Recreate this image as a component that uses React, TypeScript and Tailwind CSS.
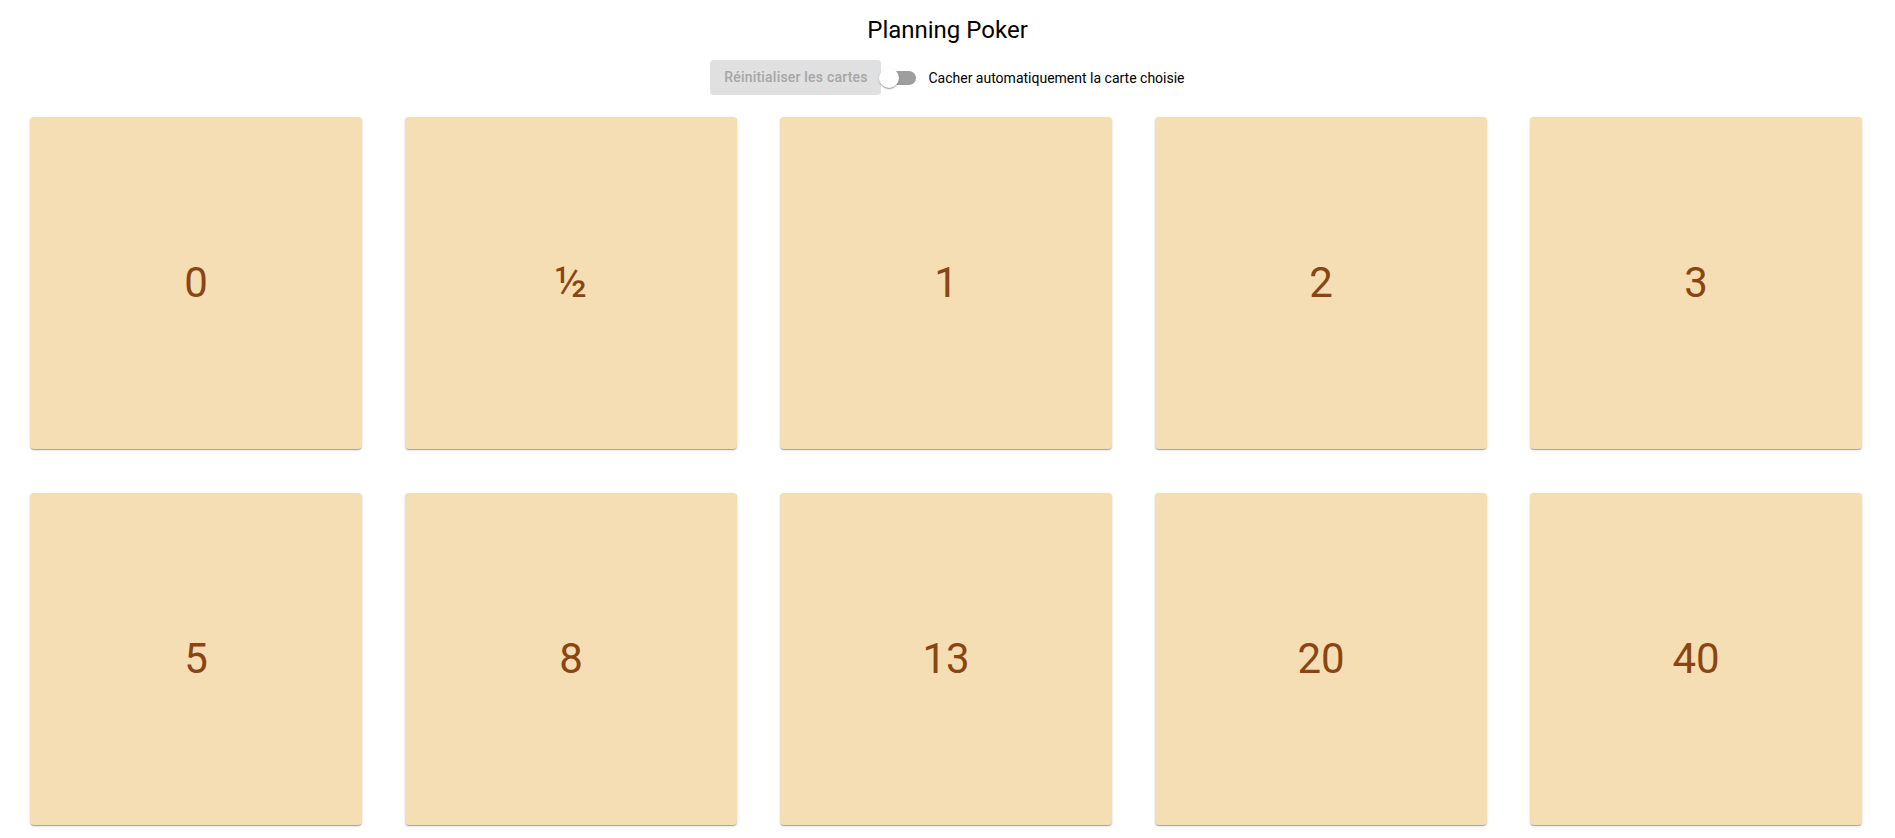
import React from "react";

const values = ["0", "½", "1", "2", "3", "5", "8", "13", "20", "40"];

export default function App() {
  return (
    <div className="min-h-screen bg-white font-['Roboto',_'Liberation_Sans',_sans-serif] text-black">
      <div className="flex h-[46px] items-end justify-center">
        <h1 className="text-[24px] font-normal leading-[32px]">Planning Poker</h1>
      </div>
      <div className="mt-[14px] flex h-[35px] items-center justify-center">
        <button
          disabled
          className="h-[35px] w-[171px] rounded-[4px] bg-[#e0e0e0] text-[14px] font-medium tracking-[0.2px] text-[#a6a6a6]"
        >
          Réinitialiser les cartes
        </button>
        <label className="ml-[-11px] flex items-center">
          <span className="relative flex h-[38px] w-[58px] items-center justify-center">
            <span className="h-[14px] w-[34px] rounded-[7px] bg-[#9e9e9e]" />
            <span className="absolute left-[9px] top-[9px] h-[20px] w-[20px] rounded-full bg-white shadow-[0_2px_1px_-1px_rgba(0,0,0,0.2),0_1px_1px_0_rgba(0,0,0,0.14),0_1px_3px_0_rgba(0,0,0,0.12)]" />
          </span>
          <span className="text-[14px] leading-[20px]">Cacher automatiquement la carte choisie</span>
        </label>
      </div>
      <div className="mt-[22px] grid grid-cols-[repeat(5,332px)] gap-x-[43px] gap-y-[44px] pl-[30px]">
        {values.map((v) => (
          <div
            key={v}
            className="flex h-[332px] w-[332px] items-center justify-center rounded-[4px] bg-[#f5deb3] shadow-[0_2px_1px_-1px_rgba(0,0,0,0.2),0_1px_1px_0_rgba(0,0,0,0.14),0_1px_3px_0_rgba(0,0,0,0.12)]"
          >
            <span className="text-[42px] leading-none text-[#8b4513]">{v}</span>
          </div>
        ))}
      </div>
    </div>
  );
}
